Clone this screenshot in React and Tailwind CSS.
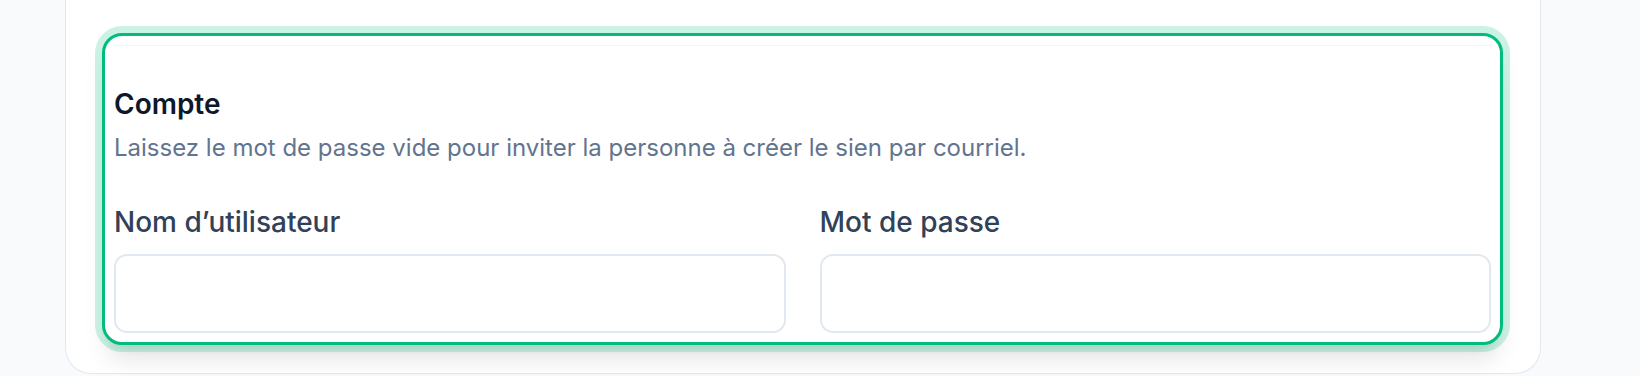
import React from 'react';

// Single form field: label + empty input box
const Field = ({ label, type = 'text' }) => (
  <div className="flex flex-col">
    <label className="text-[28px] leading-[34px] font-medium text-slate-700">{label}</label>
    <input
      type={type}
      className="mt-[15px] h-[79px] w-full rounded-[13px] border-2 border-slate-200 bg-white px-4 text-[22px] outline-none"
    />
  </div>
);

const App = () => {
  return (
    <div
      className="h-[376px] w-full overflow-hidden bg-slate-50 pl-[65px]"
      style={{ fontFamily: 'Inter, "Noto Sans", sans-serif' }}
    >
      {/* Outer card, its top is cut off by the viewport */}
      <div className="h-[374px] w-[1476px] rounded-b-[26px] border border-t-0 border-slate-200 bg-white pl-[36px] pt-[33px]">
        {/* Highlighted section */}
        <div className="w-[1401px] rounded-[20px] border-[3px] border-emerald-500 bg-white px-[9px] pb-[9px] pt-[9px] shadow-xl ring-[7px] ring-emerald-500/20">
          <div className="border-t border-slate-100 pt-[40px]">
            <h2 className="text-[28px] leading-[36px] font-semibold text-slate-900">Compte</h2>
            <p className="mt-[10px] text-[24px] leading-[32px] text-slate-500">
              Laissez le mot de passe vide pour inviter la personne à créer le sien par courriel.
            </p>
            <div className="mt-[41px] grid grid-cols-2 gap-x-[34px]">
              <Field label="Nom d’utilisateur" />
              <Field label="Mot de passe" type="password" />
            </div>
          </div>
        </div>
      </div>
    </div>
  );
};

export default App;
